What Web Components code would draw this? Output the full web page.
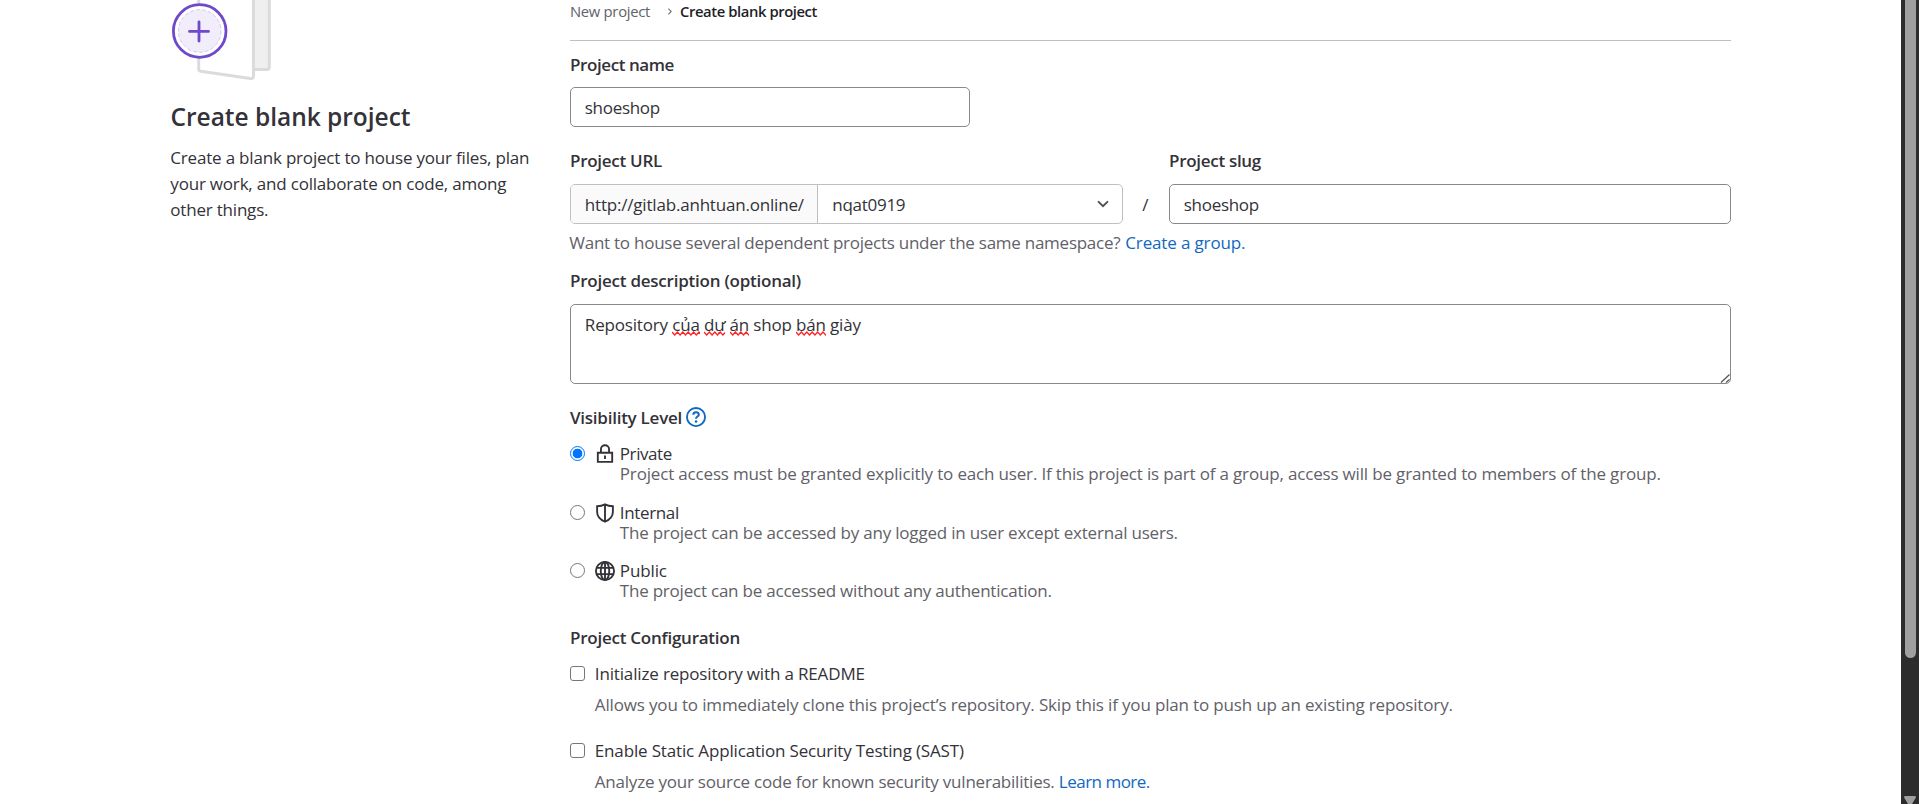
<!DOCTYPE html>
<html lang="en"><head><meta charset="utf-8"><title>Create blank project</title>
<style>
html,body{margin:0;height:100%;overflow:hidden;background:#fff}
body{font-family:"Open Sans","Noto Sans",sans-serif;color:#333238}
</style></head><body><project-page></project-page>
<script>
const define=(name,html,ready)=>customElements.define(name,class extends HTMLElement{
  connectedCallback(){
    if(this.shadowRoot)return;
    this.attachShadow({mode:'open'}).innerHTML=html;
    if(ready)ready(this,this.shadowRoot);
  }
});

/* One line of text whose tracking adapts to the requested width. */
define('text-line',`<style>
:host{display:inline-block;font-size:17px;line-height:28px;height:26px;white-space:pre;vertical-align:top;flex:none}
:host(:not([strong],[small])) span{margin-left:-.7px}
:host([strong]){font-weight:600}
:host([muted]){color:#626168}
:host([link]){color:#1068bf}
:host([raised]){line-height:26px}
:host([title-size]){font-size:24.5px;line-height:34px;height:34px}
:host([small]){font-size:14.8px;line-height:24px;height:24px}
:host([tight]){line-height:20px;height:20px}
span{display:inline-block}
</style><span><slot></slot></span>`,(el,root)=>{
  const w=parseFloat(el.getAttribute('w'));
  if(!w)return;
  const s=root.querySelector('span'),n=el.textContent.length;
  s.style.letterSpacing=((w-s.getBoundingClientRect().width)/n).toFixed(4)+'px';
  el.style.width=w+'px';
});

define('ui-icon',`<style>:host{display:block;flex:none;width:20px;height:20px}svg{display:block;width:100%;height:100%;overflow:visible;fill:none;stroke:currentColor}</style><svg viewBox="0 0 16 16"></svg>`,(el,root)=>{
  const shapes={
    lock:'<path stroke-width="1.5" d="M2.25 7h11.5v7.25H2.25zM4.750 7V4.200a3.250 3.250 0 0 1 6.500 0V7M8 9.200v2.700"/>',
    shield:'<path stroke-width="1.5" d="M8 1.100v13.700M8 1.100C6.200 2 4 2.500 1.700 2.600v4.600c0 3.600 2.600 6.200 6.300 7.800 3.700-1.600 6.300-4.200 6.300-7.800V2.600C12 2.500 9.800 2 8 1.100z"/>',
    globe:'<g stroke-width="1.5"><circle cx="8" cy="8" r="7.250"/><ellipse cx="8" cy="8" rx="3.400" ry="7.250"/><path d="M1.200 5.500h13.600M1.200 10.500h13.600M8 .8v14.400"/></g>',
    help:'<circle cx="8" cy="8" r="7.250" stroke-width="1.500"/><path stroke-width="1.600" d="M5.800 6.200c.1-1.300 1-2 2.200-2s2.200.8 2.200 1.900c0 1.500-2.200 1.500-2.200 3.200"/><circle cx="8" cy="11.500" r="1" fill="currentColor" stroke="none"/>',
    down:'<path stroke-width="1.600" stroke-linecap="round" d="M4.500 6.300 8 9.700l3.500-3.400"/>',
    right:'<path stroke-width="2" d="M6 3l5 5-5 5"/>'
  };
  root.querySelector('svg').innerHTML=shapes[el.getAttribute('name')];
});

define('text-box',`<style>
:host{display:flex;box-sizing:border-box;height:40px;border:1px solid #89888d;border-radius:5px;padding:6px 15px 0 14.5px;background:#fff;position:relative}
:host([multi]){height:80px}
svg{position:absolute;right:0;bottom:0;display:none}
:host([multi]) svg{display:block}
</style><slot></slot><svg width="10" height="10" fill="none" stroke="#555" stroke-width="1.2"><path d="M1 9.500 9.500 1.500M6 9.500l3.500-3"/></svg>`);

define('namespace-select',`<style>
:host{display:flex;box-sizing:border-box;width:553px;height:40px;border:1px solid #bfbfc3;border-radius:5px;overflow:hidden}
.prefix{box-sizing:border-box;width:247px;background:#fafafa;border-right:1px solid #bfbfc3;padding:6px 0 0 14.5px}
.value{flex:1;display:flex;justify-content:space-between;padding:6px 9px 0 15px}
ui-icon{margin-top:3px;color:#535158}
</style><div class="prefix"><text-line w="219">http://gitlab.anhtuan.online/</text-line></div>
<div class="value"><text-line w="73">nqat0919</text-line><ui-icon name="down"></ui-icon></div>`);

define('visibility-option',`<style>
:host{display:grid;grid-template-columns:25px 25.5px 1fr;height:40px;margin-bottom:18.5px}
.dot{box-sizing:border-box;width:15px;height:15px;border:1px solid #767676;border-radius:50%;margin-top:2px}
:host([checked]) .dot{border:1.5px solid #0075ff;background:radial-gradient(circle,#0075ff 0 4.5px,#fff 5.2px)}
.copy{display:flex;flex-direction:column;align-items:flex-start}
</style><div class="dot"></div><slot name="icon"></slot><div class="copy"><slot></slot></div>`);

define('check-option',`<style>
:host{display:grid;grid-template-columns:25.5px 1fr;height:57px}
.box{box-sizing:border-box;width:15px;height:15px;border:1.2px solid #767676;border-radius:3px;margin-top:6px}
.help{grid-column:2;display:flex;margin-top:5px}
</style><div class="box"></div><slot></slot><div class="help"><slot name="help"></slot></div>`);

define('scroll-bar',`<style>
:host{display:flex;flex-direction:column;justify-content:space-between;align-items:center;width:18px;height:804px;background:#2c2c2c;overflow:hidden}
.thumb{width:11px;height:658px;border-radius:0 0 6px 6px;background:#9f9f9f;margin-left:1px}
svg{display:block}
</style><div class="thumb"></div><svg width="12" height="8"><path d="M1 0h10q1.500.6.6 2L8 8H4L.4 2Q-.5.6 1 0z" fill="#9f9f9f"/></svg>`);

define('project-intro',`<style>
:host{display:flex;flex-direction:column;align-items:flex-start;width:399px}
svg{display:block}
.title{margin:16px 0 0 -.5px}
.copy{display:flex;flex-direction:column;margin-top:11px}
</style><svg width="110" height="84" fill="none">
<path d="M66 -4h31.500V67q0 2.500-2.500 2.500H66z" transform="translate(-30)" stroke="none"/>
<path d="M81 -4H98V67q0 2.500-2.500 2.500H81z" transform="translate(-30)" stroke="#dbdbdb" stroke-width="3" fill="#efefef"/>
<path d="M27.500 -4V69q0 2 2 2.300L79 78.500" stroke="none"/>
<path d="M27.500 -4V68.500q0 2 2 2.300L79 78" stroke="none"/>
</svg>
<div class="title"><text-line strong title-size w="240">Create blank project</text-line></div>
<div class="copy"><text-line raised w="359">Create a blank project to house your files, plan</text-line><text-line raised w="336">your work, and collaborate on code, among</text-line><text-line raised w="98">other things.</text-line></div>`,(el,root)=>{
  root.querySelector('svg').innerHTML=`
<path d="M81 -4h17.300v71q0 2.500-2.500 2.500H81z" stroke="#dbdbdb" stroke-width="3" fill="#efefef"/>
<path d="M27.700 -4V69q0 2 2 2.300L79.500 78.500q3 .4 3-2.500V-4z" fill="#fff" stroke="#dbdbdb" stroke-width="3"/>
<circle cx="28.700" cy="31" r="26.300" fill="#fff" stroke="#6e49cb" stroke-width="2.800"/>
<circle cx="28.700" cy="31" r="21.300" fill="#f1edfa" stroke="#d5c9f2" stroke-dasharray="4 2"/>
<path d="M18.500 31.400h19M28 22v19" stroke="#6e49cb" stroke-width="2.800" stroke-linecap="round"/>`;
});

define('project-form',`<style>
:host{display:flex;flex-direction:column;width:1161px}
.crumb{display:flex;height:24px;margin-top:-1px}
.crumb ui-icon{width:9px;height:9px;margin:8px 6px 0 15px;color:#737278}
.rule{height:1px;background:#bfbfc3;margin:17px 0 10px}
.label{display:flex;height:26px}
.name{width:400px;margin:10px 0 20px}
.heads{display:grid;grid-template-columns:599px 1fr;height:26px}
.url{display:grid;grid-template-columns:553px 46px 562px;margin:11px 0 5px;height:40px}
.url>text-line{margin:7px 0 0 20px}
.hint{display:flex;gap:5px;height:26px;margin-bottom:12px}
.area{margin:11px 0 20px}
.vis{align-items:center;gap:4px;margin-bottom:14px}
.config{margin:4.75px 0 10px}
.gap{height:20px}
</style>
<div class="crumb"><text-line small muted w="80">New project</text-line><ui-icon name="right"></ui-icon><text-line small strong style="color:#1f1e24" w="137">Create blank project</text-line></div>
<div class="rule"></div>
<div class="label"><text-line strong w="104">Project name</text-line></div>
<text-box class="name"><text-line w="75">shoeshop</text-line></text-box>
<div class="heads"><text-line strong w="92">Project URL</text-line><text-line strong w="92">Project slug</text-line></div>
<div class="url"><namespace-select></namespace-select><text-line>/</text-line><text-box><text-line w="75">shoeshop</text-line></text-box></div>
<div class="hint"><text-line muted w="551">Want to house several dependent projects under the same namespace?</text-line><text-line link w="120">Create a group.</text-line></div>
<div class="label"><text-line strong w="231">Project description (optional)</text-line></div>
<text-box multi class="area"><squiggle-text></squiggle-text></text-box>
<div class="label vis"><text-line strong w="112">Visibility Level</text-line><ui-icon name="help" style="color:#1068bf"></ui-icon></div>
<visibility-option checked><ui-icon slot="icon" name="lock"></ui-icon><text-line tight w="52">Private</text-line><text-line tight muted w="1041">Project access must be granted explicitly to each user. If this project is part of a group, access will be granted to members of the group.</text-line></visibility-option>
<visibility-option><ui-icon slot="icon" name="shield"></ui-icon><text-line tight w="59">Internal</text-line><text-line tight muted w="558">The project can be accessed by any logged in user except external users.</text-line></visibility-option>
<visibility-option><ui-icon slot="icon" name="globe"></ui-icon><text-line tight w="47">Public</text-line><text-line tight muted w="432">The project can be accessed without any authentication.</text-line></visibility-option>
<div class="label config"><text-line strong w="170">Project Configuration</text-line></div>
<check-option><text-line w="270">Initialize repository with a README</text-line><text-line slot="help" muted w="858">Allows you to immediately clone this project’s repository. Skip this if you plan to push up an existing repository.</text-line></check-option>
<div class="gap"></div>
<check-option><text-line w="369">Enable Static Application Security Testing (SAST)</text-line><text-line slot="help" muted w="464">Analyze your source code for known security vulnerabilities. </text-line><text-line slot="help" link w="91">Learn more.</text-line></check-option>`);

define('squiggle-text',`<style>
:host{display:block;height:26px}
.line{font-size:17px;line-height:28px;white-space:pre;display:inline-block;margin-left:-.7px}
i{font-style:normal;position:relative;display:inline-block}
i svg{position:absolute;left:0;top:20px;width:100%;height:5px;overflow:hidden}
</style><span class="line">Repository <i>của</i> <i>dự</i> <i>án</i> shop <i>bán</i> giày</span>`,(el,root)=>{
  const line=root.querySelector('.line');
  line.style.letterSpacing=((276-line.getBoundingClientRect().width)/line.textContent.length).toFixed(4)+'px';
  let d='M0 1';for(let x=2.7,k=0;x<60;x+=2.7,k++)d+=`L${x.toFixed(1)} ${k%2?1:4}`;
  root.querySelectorAll('i').forEach(i=>i.insertAdjacentHTML('beforeend',`<svg><path d="${d}" fill="none" stroke="#f22" stroke-width="1.3"/></svg>`));
});

define('project-page',`<style>
:host{display:grid;grid-template-columns:1fr 18px;width:1919px;height:804px;overflow:hidden}
main{display:flex;padding-left:171px;height:804px;overflow:hidden}
</style><main><project-intro></project-intro><project-form></project-form></main><scroll-bar></scroll-bar>`);
</script></body></html>
